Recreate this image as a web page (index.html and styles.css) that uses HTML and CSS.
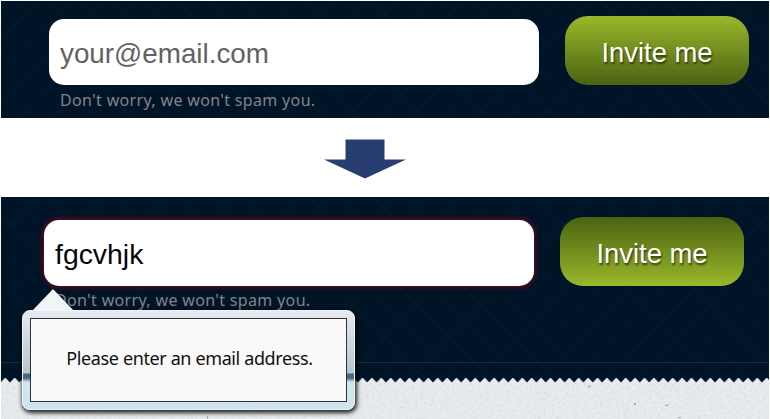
FILE: index.html
```html
<!DOCTYPE html>
<html lang="en">
<head>
<meta charset="utf-8">
<title>Invite form validation</title>
<link rel="stylesheet" href="styles.css">
</head>
<body>
<section class="panel panel-initial">
  <form class="invite">
    <div class="field">
      <div class="input placeholder">your@email.com</div>
      <p class="hint">Don't worry, we won't spam you.</p>
    </div>
    <div class="button">Invite me</div>
  </form>
</section>
<div class="transition">
  <svg width="82" height="40" viewBox="0 0 82 40"><path d="M21.500 .5H60.500V20.500H82L41 39.500L0 20.500H21.500Z" fill="#293e70"/></svg>
</div>
<section class="panel panel-invalid">
  <form class="invite">
    <div class="field">
      <div class="input invalid">fgcvhjk</div>
      <p class="hint">Don't worry, we won't spam you.</p>
    </div>
    <div class="button pressed">Invite me</div>
  </form>
  <div class="tooltip" role="alert">
    <svg class="tip" width="42" height="22" viewBox="0 0 42 22"><path d="M0 22L21 0L42 22Z" fill="#f2f5f8"/></svg>
    <div class="message">Please enter an email address.</div>
  </div>
</section>
<footer class="paper">
  <svg width="768" height="41" viewBox="0 0 768 41">
    <defs>
      <pattern id="teeth" x="-.4" width="9.4" height="6" patternUnits="userSpaceOnUse"><path d="M0 6V4.400L4.200 0H5.200L9.400 4.400V6Z" fill="#e9edef"/></pattern>
      <filter id="grain" x="0" y="0" width="100%" height="100%">
        <feTurbulence type="fractalNoise" baseFrequency=".35" numOctaves="3" seed="4"/>
        <feColorMatrix values="0 0 0 0 .4  0 0 0 0 .44  0 0 0 0 .48  .5 0 0 0 -.22"/>
      </filter>
    </defs>
    <rect width="768" height="5" fill="url(#teeth)"/>
    <rect y="4.400" width="768" height="37" fill="#e7ebee"/>
    <rect y="5" width="768" height="36" filter="url(#grain)"/>
    <g fill="#a9b0b5"><path d="M586 9l3-2 1 1-3 2zM664 27l4-1-1 2h-3zM633 25h2v2h-2zM206 38h1v3h-1zM677 39h3v1h-3z"/></g>
  </svg>
</footer>
</body>
</html>
```
FILE: styles.css
```css
* { box-sizing: border-box; }

body {
  margin: 0;
  padding: 1px 1px 0;
  width: 770px;
  height: 419px;
  overflow: hidden;
  background: #fff;
  font-family: "Liberation Sans", Arial, sans-serif;
}

.panel {
  background:
    repeating-linear-gradient(45deg, rgba(60, 100, 120, .05) 0 1px, transparent 1px 23px),
    repeating-linear-gradient(-45deg, rgba(60, 100, 120, .05) 0 1px, transparent 1px 23px),
    #001427;
}

.panel-initial {
  height: 117px;
  padding: 15px 0 0 48px;
}

.panel-invalid {
  position: relative;
  height: 181px;
  padding: 20px 0 0 43px;
  background:
    linear-gradient(#182a40, #182a40) 0 165px / 100% 1px no-repeat,
    repeating-linear-gradient(45deg, rgba(60, 100, 120, .05) 0 1px, transparent 1px 23px),
    repeating-linear-gradient(-45deg, rgba(60, 100, 120, .05) 0 1px, transparent 1px 23px),
    #001427;
}

.invite {
  display: flex;
  gap: 26px;
}

.field {
  width: 490px;
  padding-top: 3px;
}

.input {
  height: 66px;
  padding: 1px 11px 0;
  border-radius: 15px;
  background: #fff;
  font-size: 27.8px;
  line-height: 66px;
}

.placeholder {
  padding-top: 2px;
  color: #626262;
}

.invalid {
  color: #050510;
  font-size: 28.4px;
  box-shadow: 0 0 4px 2px #540a20;
}

.hint {
  margin: 4px 0 0 11px;
  color: #818487;
  font: 16px/22px "Noto Sans", "Open Sans", sans-serif;
  letter-spacing: .34px;
  white-space: nowrap;
}

.panel-invalid .hint { margin-top: 3px; }

.button {
  width: 184px;
  height: 69px;
  padding-top: 2px;
  border-radius: 23px;
  background: linear-gradient(#9ab82b, #4b6212);
  color: #fff;
  font-size: 27.4px;
  line-height: 69px;
  text-align: center;
  text-shadow: 1px 2px 2px rgba(20, 35, 0, .75);
}

.pressed { background: linear-gradient(#4b6212, #9ab82b); }

.transition {
  display: flex;
  justify-content: center;
  height: 79px;
  padding: 21px 40px 0 0;
}

.tooltip {
  position: absolute;
  z-index: 1;
  top: 113px;
  left: 21px;
  width: 333px;
  height: 100px;
  padding: 8px;
  border: 1px solid #eef4f8;
  border-radius: 8px;
  background: linear-gradient(#e6eaf0, #b8c4ce 62px, #4b677b 63px, #4b677b 67px, #d2e5f1 71px, #cfe3f0);
  box-shadow: 1px 2px 4px 1px rgba(0, 0, 0, .85);
}

.tip {
  position: absolute;
  top: -22px;
  left: 9px;
}

.message {
  height: 84px;
  margin: -1px;
  padding-left: 2px;
  border: 1px solid #303236;
  background: #f9f9f9;
  color: #101010;
  font: 18px/78px "Noto Sans", "Open Sans", sans-serif;
  letter-spacing: -.38px;
  text-align: center;
  white-space: nowrap;
}

.paper {
  height: 41px;
  background: #001427;
}

.paper svg { display: block; }
```
